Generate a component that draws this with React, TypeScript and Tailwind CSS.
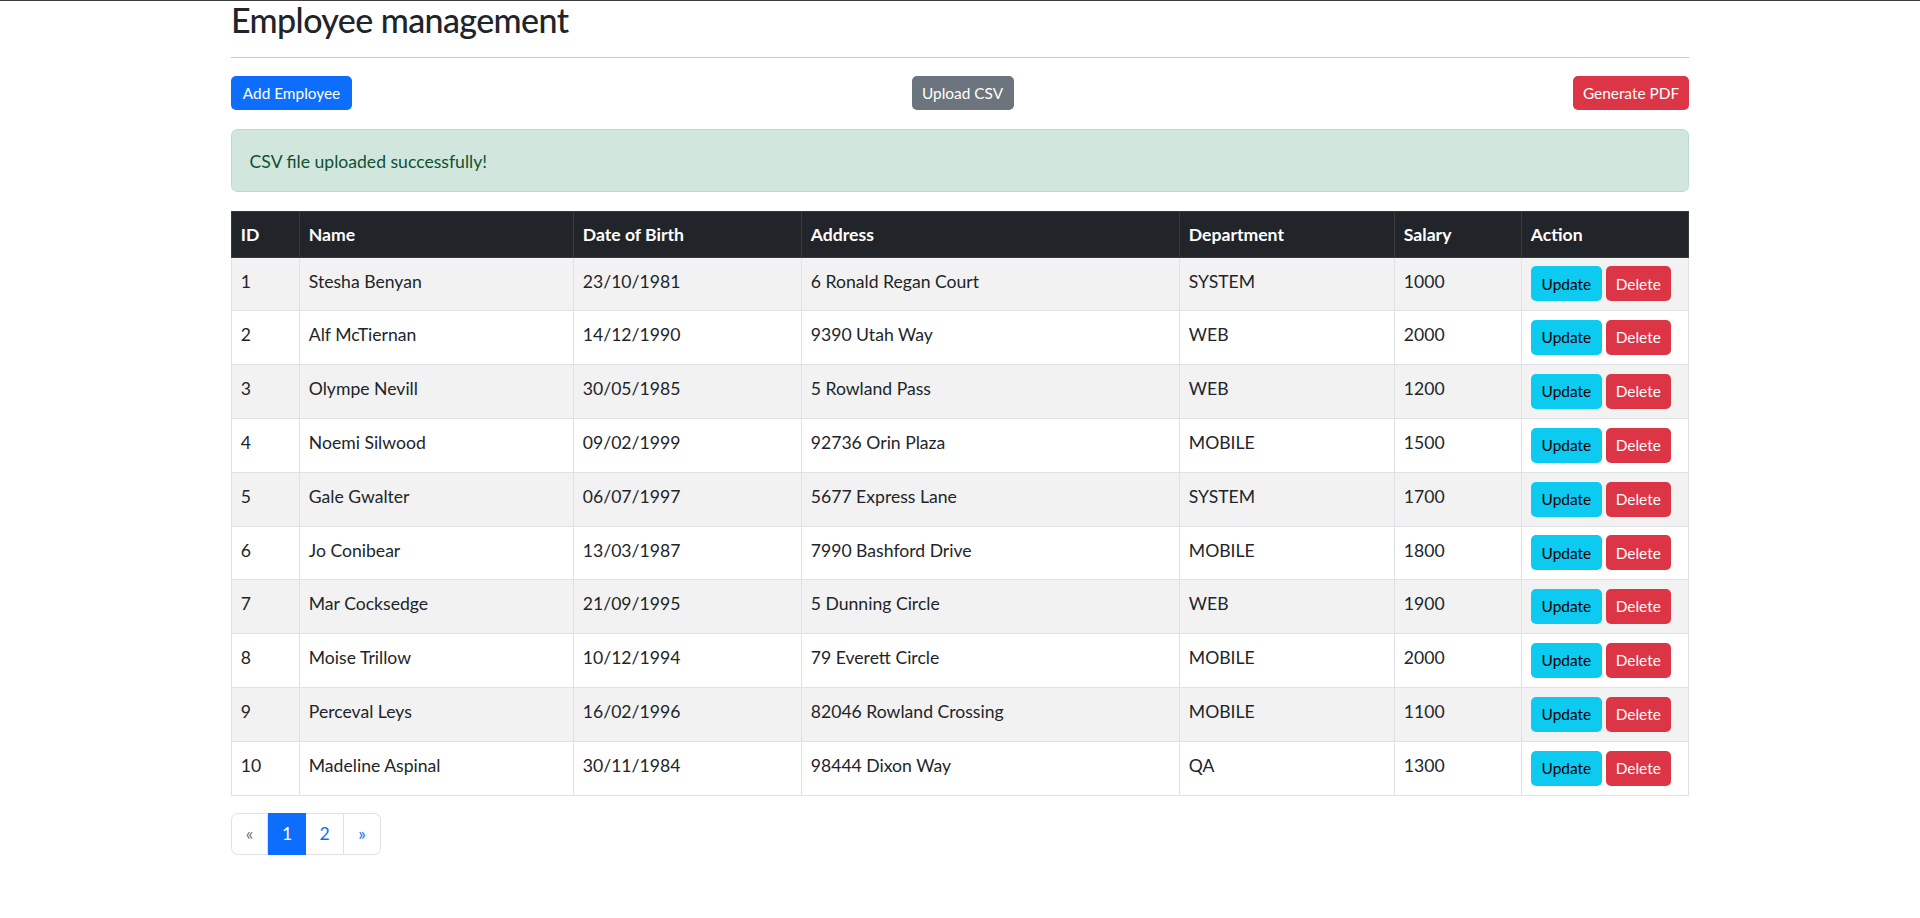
import React from 'react'

const EMPLOYEES = [
  { id: 1, name: 'Stesha Benyan', dob: '23/10/1981', address: '6 Ronald Regan Court', dept: 'SYSTEM', salary: 1000 },
  { id: 2, name: 'Alf McTiernan', dob: '14/12/1990', address: '9390 Utah Way', dept: 'WEB', salary: 2000 },
  { id: 3, name: 'Olympe Nevill', dob: '30/05/1985', address: '5 Rowland Pass', dept: 'WEB', salary: 1200 },
  { id: 4, name: 'Noemi Silwood', dob: '09/02/1999', address: '92736 Orin Plaza', dept: 'MOBILE', salary: 1500 },
  { id: 5, name: 'Gale Gwalter', dob: '06/07/1997', address: '5677 Express Lane', dept: 'SYSTEM', salary: 1700 },
  { id: 6, name: 'Jo Conibear', dob: '13/03/1987', address: '7990 Bashford Drive', dept: 'MOBILE', salary: 1800 },
  { id: 7, name: 'Mar Cocksedge', dob: '21/09/1995', address: '5 Dunning Circle', dept: 'WEB', salary: 1900 },
  { id: 8, name: 'Moise Trillow', dob: '10/12/1994', address: '79 Everett Circle', dept: 'MOBILE', salary: 2000 },
  { id: 9, name: 'Perceval Leys', dob: '16/02/1996', address: '82046 Rowland Crossing', dept: 'MOBILE', salary: 1100 },
  { id: 10, name: 'Madeline Aspinal', dob: '30/11/1984', address: '98444 Dixon Way', dept: 'QA', salary: 1300 },
]

const COLS = 'grid grid-cols-[69px_274px_228px_378px_215px_127px_167px]'

function HeadCell({ children, first }: { children: React.ReactNode; first?: boolean }) {
  return (
    <div
      className={`border-r border-t border-b border-[#373b3e] px-[8.8px] pt-[10px] font-bold text-white ${first ? 'border-l' : ''}`}
    >
      {children}
    </div>
  )
}

function Cell({ children, first }: { children: React.ReactNode; first?: boolean }) {
  return (
    <div className={`border-r border-b border-[#dee2e6] px-[8.8px] pt-[11px] ${first ? 'border-l' : ''}`}>
      {children}
    </div>
  )
}

export default function App() {
  return (
    <div
      className="min-h-[918px] border-t border-[#3c3c3c] bg-white text-[17.6px] leading-[26.4px] text-[#212529]"
      style={{ fontFamily: '"Segoe UI", Lato, "Liberation Sans", sans-serif' }}
    >
      <div className="mx-auto w-[1458px]">
        {/* Title */}
        <h2 className="h-[40px] text-[34px] leading-[38px] font-medium tracking-[-0.6px]">Employee management</h2>
        <div className="mt-[16px] h-px bg-[#c8c9ca]" />

        {/* Toolbar */}
        <div className="mt-[18px] flex items-center justify-between">
          <button className="h-[34px] w-[121px] rounded-[5px] bg-[#0d6efd] text-[15.4px] text-white">Add Employee</button>
          <button className="h-[34px] w-[102px] rounded-[5px] bg-[#6c757d] text-[15.4px] text-white">Upload CSV</button>
          <button className="h-[34px] w-[116px] rounded-[5px] bg-[#dc3545] text-[15.4px] text-white">Generate PDF</button>
        </div>

        {/* Alert */}
        <div className="mt-[18.6px] rounded-[6.6px] border border-[#badbcc] bg-[#d1e7dd] px-[17.6px] pt-[19.6px] pb-[15.6px] text-[#0f5132]">
          CSV file uploaded successfully!
        </div>

        {/* Table */}
        <div className="mt-[18.4px]">
          <div className={`${COLS} h-[47px] bg-[#212529]`}>
            <HeadCell first>ID</HeadCell>
            <HeadCell>Name</HeadCell>
            <HeadCell>Date of Birth</HeadCell>
            <HeadCell>Address</HeadCell>
            <HeadCell>Department</HeadCell>
            <HeadCell>Salary</HeadCell>
            <HeadCell>Action</HeadCell>
          </div>
          {EMPLOYEES.map((e, i) => (
            <div key={e.id} className={`${COLS} h-[53.8px] ${i % 2 === 0 ? 'bg-[#f2f2f2]' : 'bg-white'}`}>
              <Cell first>{e.id}</Cell>
              <Cell>{e.name}</Cell>
              <Cell>{e.dob}</Cell>
              <Cell>{e.address}</Cell>
              <Cell>{e.dept}</Cell>
              <Cell>{e.salary}</Cell>
              <div className="flex gap-[4px] border-r border-b border-[#dee2e6] px-[8.8px] pt-[8.8px]">
                <button className="h-[35px] w-[71px] rounded-[5px] bg-[#0dcaf0] text-[15.4px] text-black">Update</button>
                <button className="h-[35px] w-[65px] rounded-[5px] bg-[#dc3545] text-[15.4px] text-white">Delete</button>
              </div>
            </div>
          ))}
        </div>

        {/* Pagination */}
        <div className="mt-[17.6px] flex h-[41.6px]">
          <span className="flex w-[37px] items-center justify-center rounded-l-[6.6px] border border-[#dee2e6] text-[#6c757d]">
            «
          </span>
          <span className="flex w-[38px] items-center justify-center border border-[#0d6efd] bg-[#0d6efd] text-white">1</span>
          <span className="flex w-[38px] items-center justify-center border-y border-r border-[#dee2e6] text-[#0d6efd]">2</span>
          <span className="flex w-[37px] items-center justify-center rounded-r-[6.6px] border-y border-r border-[#dee2e6] text-[#0d6efd]">
            »
          </span>
        </div>
      </div>
    </div>
  )
}
